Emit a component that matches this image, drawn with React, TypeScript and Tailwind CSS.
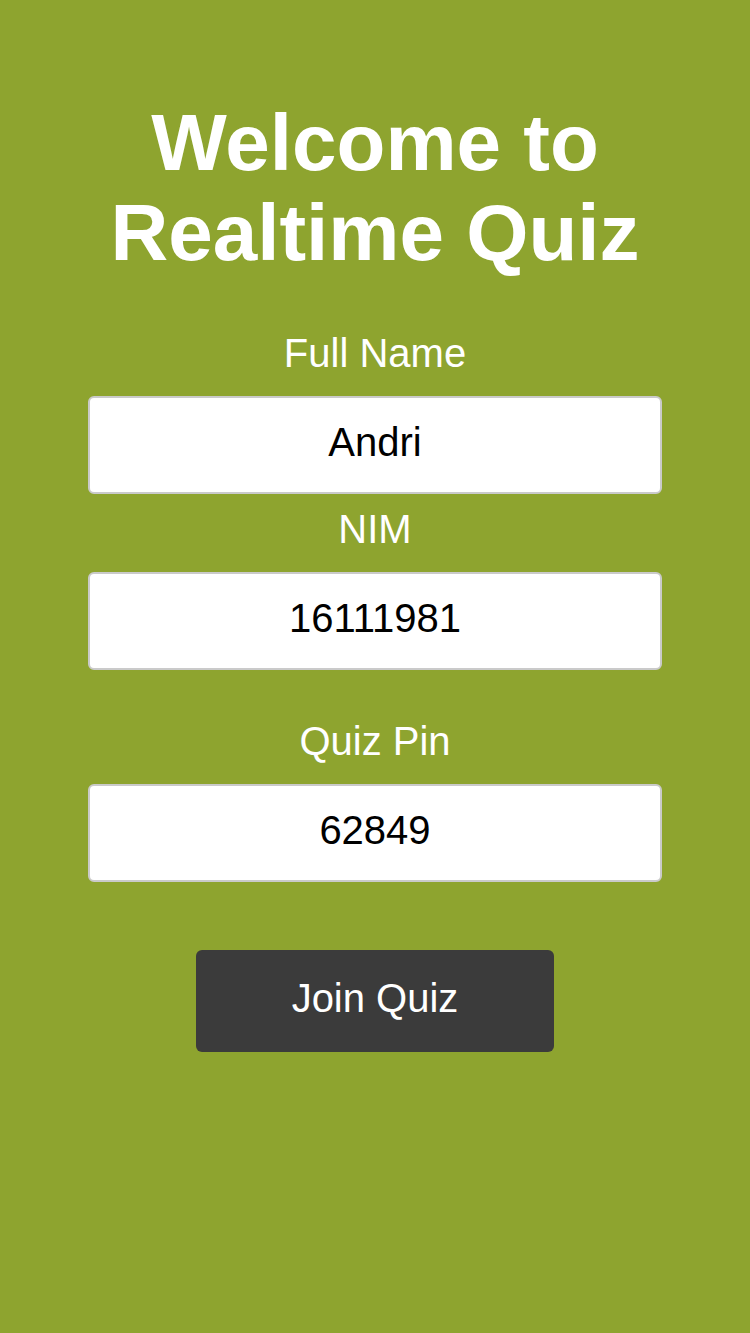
const fields = [
  { label: "Full Name", value: "Andri", gap: "mt-0" },
  { label: "NIM", value: "16111981", gap: "mt-[12px]" },
  { label: "Quiz Pin", value: "62849", gap: "mt-[48px]" },
];

const App = () => {
  return (
    <main className="min-h-[1333px] bg-[#8ea42f] font-['Liberation_Sans',Arial,sans-serif] flex flex-col items-center pt-[98px]">
      <h1 className="text-white text-[80px] leading-[90px] font-bold text-center">
        Welcome to
        <br />
        Realtime Quiz
      </h1>
      <form className="mt-[52px] flex flex-col items-center w-[574px]">
        {fields.map((f) => (
          <div key={f.label} className={`${f.gap} w-full flex flex-col items-center`}>
            <label className="text-white text-[40px] leading-[46px] mb-[20px]">
              {f.label}
            </label>
            <input
              defaultValue={f.value}
              className="w-full h-[98px] pb-[6px] bg-white border-2 border-[#cacaca] rounded-[6px] text-center text-[40px] text-black outline-none"
            />
          </div>
        ))}
        <button
          type="button"
          className="mt-[68px] w-[358px] h-[102px] pb-[6px] bg-[#3b3b3b] rounded-[6px] text-white text-[40px]"
        >
          Join Quiz
        </button>
      </form>
    </main>
  );
};

export default App;
